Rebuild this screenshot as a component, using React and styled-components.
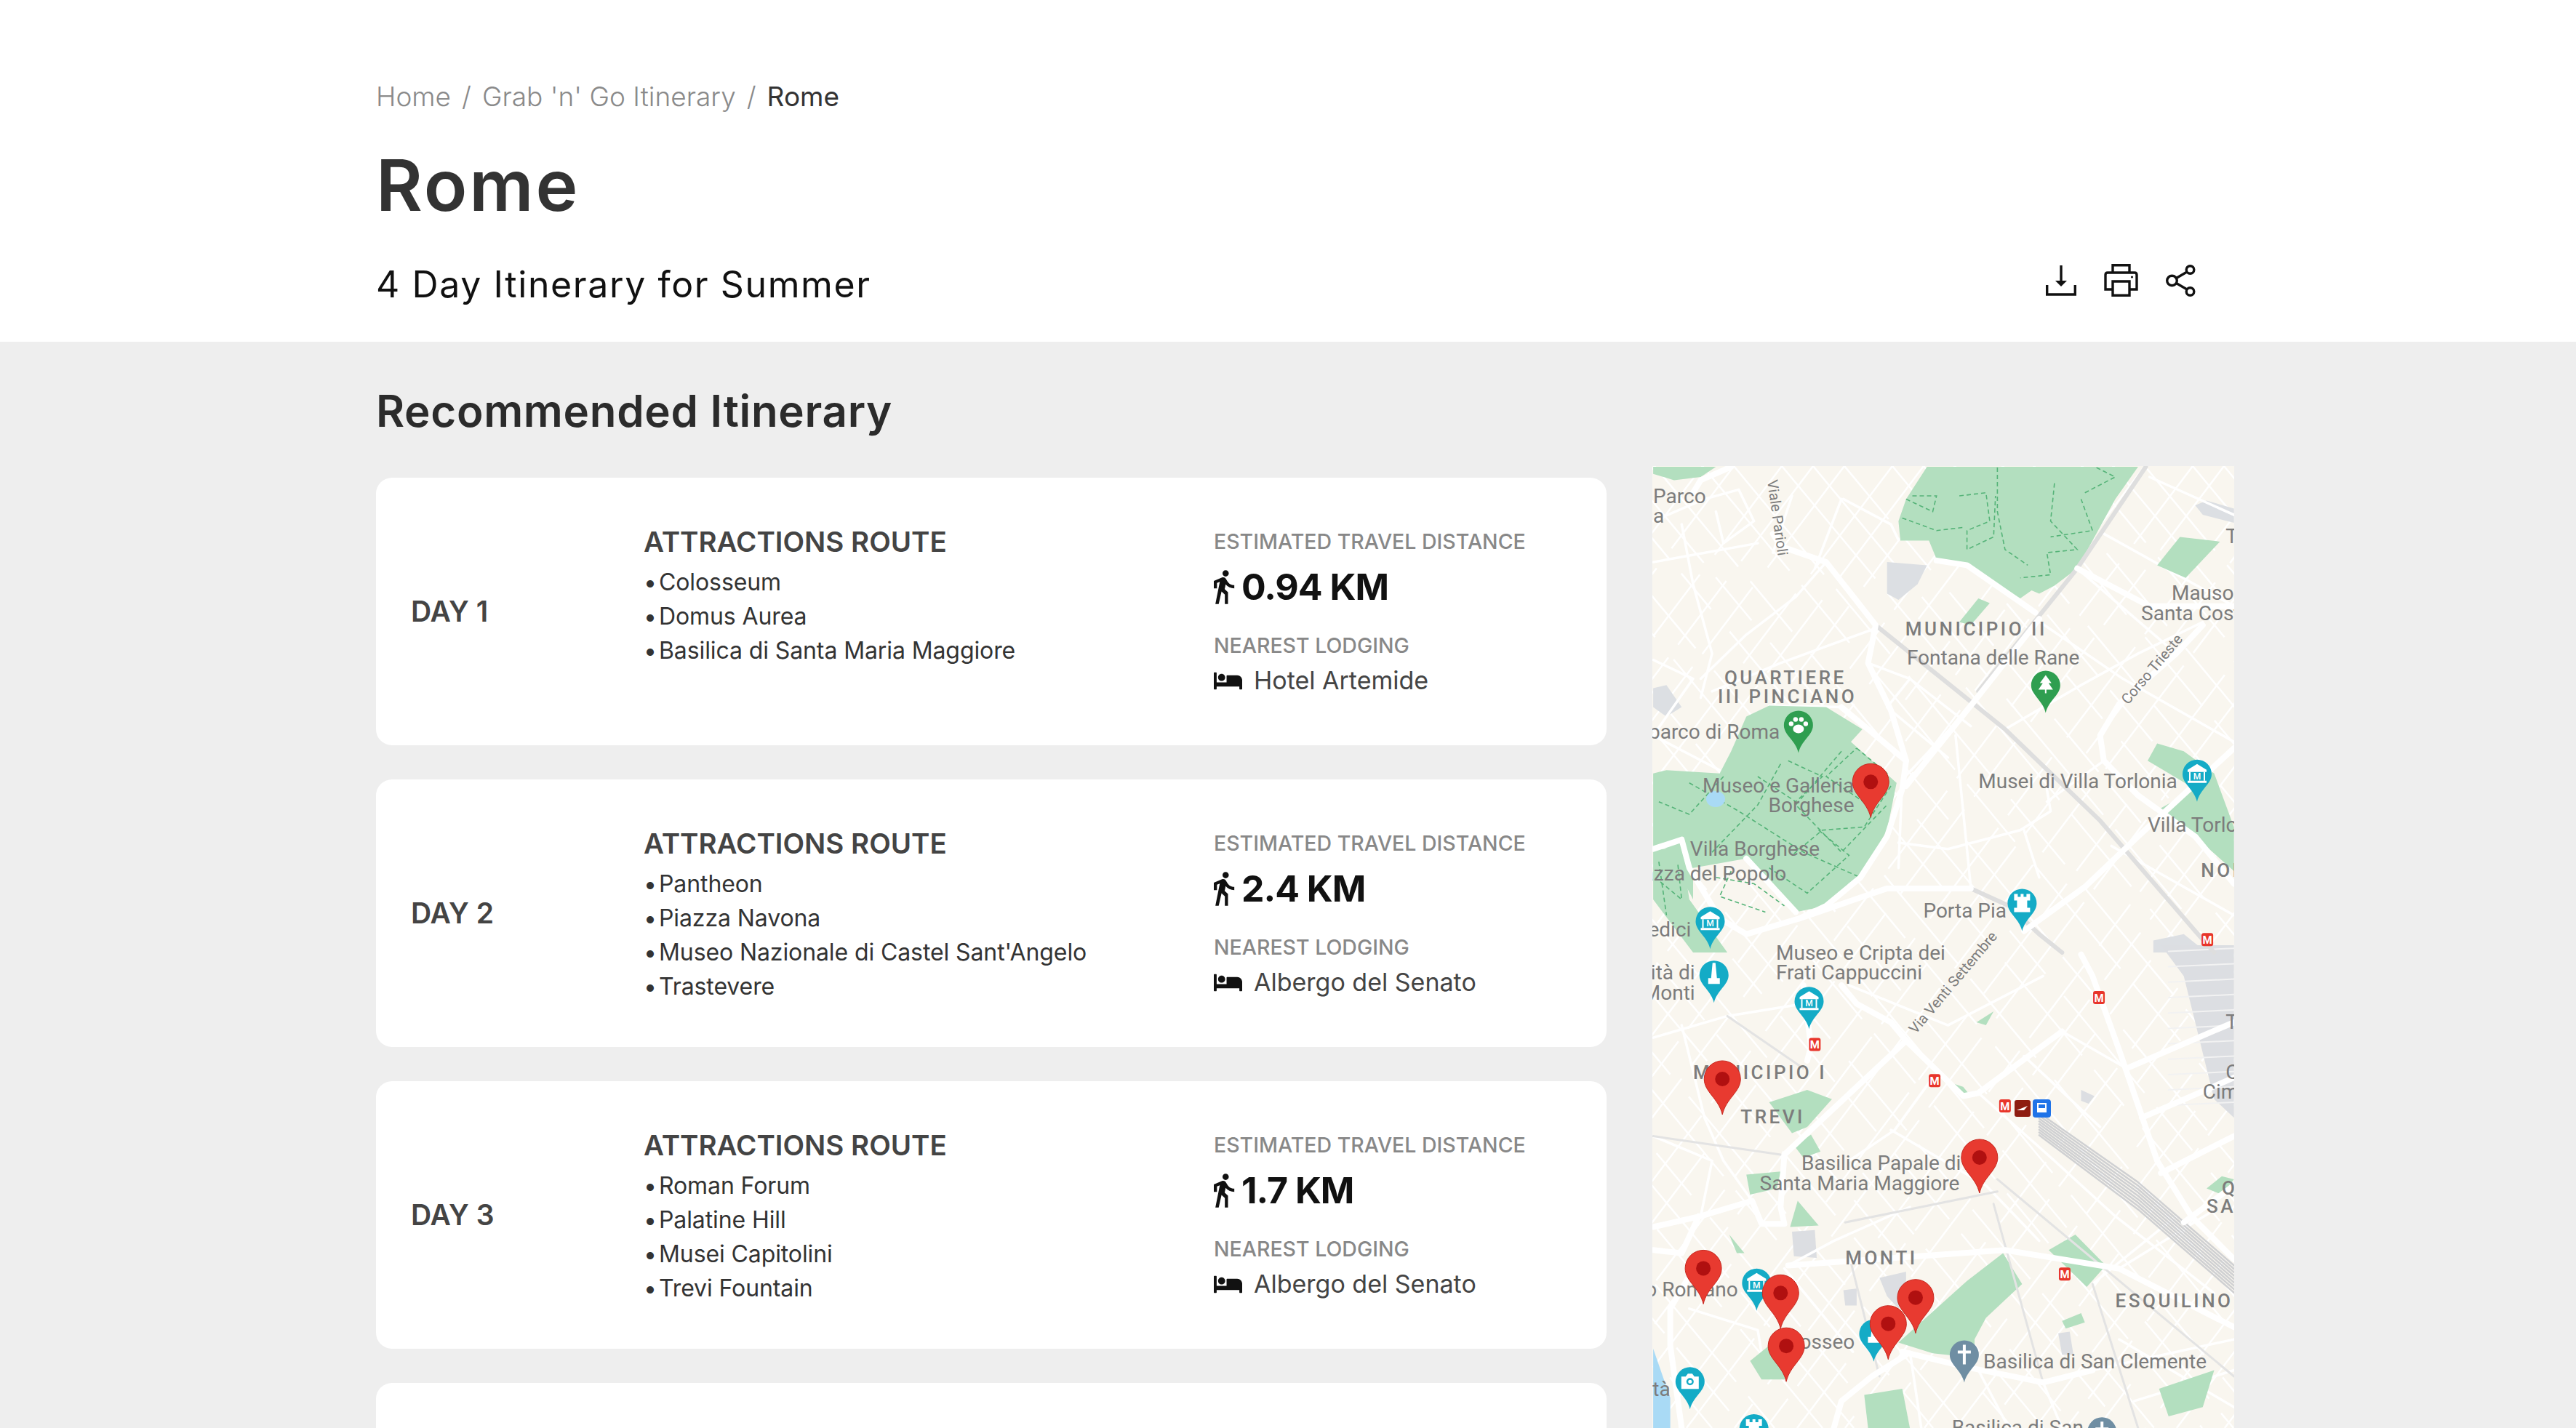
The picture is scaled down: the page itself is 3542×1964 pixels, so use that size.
import React from 'react'
import styled, { createGlobalStyle } from 'styled-components'
import { MdDirectionsWalk } from 'react-icons/md'
import { FaBed } from 'react-icons/fa'

const GlobalStyle = createGlobalStyle`
  html, body { margin: 0; padding: 0; background: #eeeeee; }
  #root { height: 1964px; overflow: hidden; font-family: Inter, "Liberation Sans", sans-serif; }
`

// map coordinates were read off two crops of the reference, so two converters
const z5 = ([x, y]) => [x / 1.912 - 12, y / 2.306 - 11]
const z6 = ([x, y]) => [x / 1.912 - 12, y / 2.361 + 659]
const line = (conv, pts, close) =>
  'M' + pts.map(p => conv(p).map(n => n.toFixed(1)).join(' ')).join('L') + (close ? 'Z' : '')

const days = [
  { day: 'DAY 1', stops: ['Colosseum', 'Domus Aurea', 'Basilica di Santa Maria Maggiore'], km: '0.94 KM', hotel: 'Hotel Artemide' },
  { day: 'DAY 2', stops: ['Pantheon', 'Piazza Navona', 'Museo Nazionale di Castel Sant\'Angelo', 'Trastevere'], km: '2.4 KM', hotel: 'Albergo del Senato' },
  { day: 'DAY 3', stops: ['Roman Forum', 'Palatine Hill', 'Musei Capitolini', 'Trevi Fountain'], km: '1.7 KM', hotel: 'Albergo del Senato' },
]

const parks5 = [
  [[745, 28], [690, 130], [670, 200], [675, 262], [750, 262], [770, 320], [860, 350], [990, 445], [1020, 420], [1040, 430], [1080, 405], [1140, 350], [1240, 130], [1300, 28]],
  [[25, 28], [190, 28], [150, 60], [80, 70], [25, 50]],
  [[270, 820], [330, 785], [480, 790], [575, 860], [545, 900], [665, 1030], [640, 1180], [570, 1330], [480, 1420], [400, 1440], [270, 1270], [130, 1300], [130, 1400], [60, 1240], [25, 1235], [25, 1000], [60, 990], [200, 1000], [230, 930]],
  [[25, 1240], [100, 1240], [120, 1400], [220, 1568], [130, 1568], [25, 1400]],
  [[1325, 960], [1350, 905], [1420, 930], [1500, 1000], [1552, 1170], [1552, 1310], [1450, 1200], [1345, 1120], [1450, 1050]],
  [[1350, 340], [1410, 250], [1515, 265], [1425, 380]],
  [[830, 520], [880, 445], [910, 460], [860, 530]],
]
const parks6 = [
  [[330, 510], [430, 470], [495, 500], [430, 590], [390, 610]],
  [[395, 650], [440, 615], [465, 670], [420, 690]],
  [[270, 745], [360, 735], [350, 790], [280, 810]],
  [[405, 830], [460, 910], [385, 915]],
  [[670, 1290], [850, 1090], [945, 1000], [995, 1100], [900, 1210], [870, 1280], [870, 1340], [760, 1325]],
  [[1065, 990], [1135, 940], [1215, 1040], [1165, 1110]],
  [[280, 1350], [330, 1300], [400, 1340], [370, 1410], [310, 1410]],
  [[580, 1460], [680, 1440], [700, 1568], [590, 1568]],
  [[1355, 1440], [1500, 1380], [1470, 1500], [1380, 1530]],
  [[1100, 1220], [1150, 1195], [1160, 1225], [1110, 1245]],
  [[815, 450], [840, 460], [860, 490], [835, 495]],
  [[225, 940], [265, 1000], [245, 1000]],
  [[1480, 790], [1520, 750], [1552, 760], [1520, 810]],
  [[875, 250], [920, 215], [900, 260]],
]
const paths5 = [
  [[690, 130], [760, 170], [770, 120], [700, 120]],
  [[830, 120], [900, 110], [910, 200], [850, 230], [850, 290], [920, 250], [925, 120]],
  [[680, 190], [770, 230], [840, 220]],
  [[1080, 80], [1070, 200], [1140, 290], [1060, 300], [1070, 370], [990, 380]],
  [[930, 30], [930, 170], [950, 290], [1010, 340]],
  [[1160, 110], [1240, 60], [1190, 30]],
  [[1150, 130], [1180, 230], [1070, 250]],
  [[120, 1030], [250, 1120], [420, 1250], [570, 1330]],
  [[360, 970], [300, 1100], [180, 1250]],
  [[520, 930], [400, 1100], [520, 1250], [640, 1100]],
  [[230, 1310], [200, 1390], [320, 1440]],
  [[650, 1040], [580, 1170], [470, 1180], [390, 1260]],
  [[40, 1280], [60, 1450]],
  [[90, 1290], [100, 1400], [40, 1340]],
  [[560, 920], [640, 1000], [590, 1100], [480, 1010], [560, 920]],
  [[460, 1180], [540, 1260], [430, 1380], [330, 1300]],
  [[210, 1010], [120, 1130], [40, 1090]],
  [[380, 960], [470, 1010], [400, 1090], [300, 1010]],
  [[190, 1330], [290, 1350], [370, 1420]],
]
const gray5 = [
  [[640, 330], [745, 340], [720, 400], [670, 450], [640, 430]],
  [[1450, 150], [1480, 135], [1552, 160], [1552, 205], [1470, 180]],
  [[25, 730], [60, 720], [100, 790], [60, 820], [25, 790]],
  [[1340, 1530], [1420, 1510], [1480, 1568], [1340, 1568]],
]
const gray6 = [
  [[1360, 0], [1552, 0], [1552, 560], [1500, 500], [1420, 100]],
  [[390, 930], [450, 925], [455, 1015], [395, 1010]],
  [[620, 1080], [690, 1060], [690, 1130], [670, 1180], [640, 1140]],
  [[525, 1120], [560, 1115], [560, 1170], [530, 1170]],
  [[1150, 470], [1185, 490], [1170, 515], [1150, 505]],
  [[1090, 1260], [1120, 1255], [1130, 1330], [1100, 1330]],
]
const bigRoads5 = [
  [[230, 28], [150, 70], [130, 110]],
  [[340, 240], [360, 280], [480, 330], [610, 530], [590, 650], [650, 800], [690, 960], [680, 1050], [640, 1200], [570, 1330], [480, 1420], [410, 1460], [270, 1510], [200, 1460], [120, 1300], [100, 1210], [25, 1240]],
  [[410, 1460], [640, 1365], [860, 1365]],
  [[520, 790], [690, 960]],
  [[690, 1040], [870, 770], [1040, 510]],
  [[1000, 1500], [1160, 1360], [1300, 1200], [1552, 920]],
  [[1470, 530], [1400, 620], [1250, 780], [1200, 880], [1210, 960], [1300, 1070], [1450, 1200], [1552, 1350]],
  [[270, 1270], [400, 1440]],
  [[1140, 350], [1330, 470], [1552, 470]],
  [[770, 325], [850, 340], [1030, 490]],
]
const railRoads5 = [
  [[860, 1365], [960, 1420], [1040, 1510], [1100, 1568]],
  [[610, 530], [950, 860], [1200, 1150], [1450, 1500], [1500, 1568]],
  [[880, 740], [1140, 350], [1320, 28]],
]
const minorRoads5 = [
  [[525, 130], [650, 210], [670, 260]], [[480, 330], [400, 440], [270, 560], [150, 700]],
  [[610, 540], [360, 650], [180, 740]], [[100, 210], [130, 400], [180, 620], [150, 760]],
  [[520, 130], [450, 350]], [[590, 650], [700, 700], [860, 850]], [[700, 700], [640, 790], [800, 950]],
  [[950, 860], [1150, 720], [1300, 620], [1470, 520]], [[1140, 350], [1400, 620]],
  [[1210, 240], [1552, 470]], [[1330, 60], [1552, 180]], [[1030, 510], [1260, 700], [1552, 900]],
  [[820, 840], [680, 1020], [670, 1300]], [[820, 880], [860, 1360]],
  [[1060, 1050], [1070, 1120], [990, 1180], [800, 1240], [670, 1220]], [[1210, 960], [1060, 1090]],
  [[1000, 1180], [1040, 1330]], [[1230, 1230], [1552, 1450]],
  [[25, 200], [160, 130], [250, 100], [290, 200], [210, 270], [190, 170]], [[390, 120], [340, 300]], [[25, 330], [300, 270]],
  [[25, 640], [130, 700], [25, 880], [200, 990]], [[330, 785], [520, 790]],
]
const bigRoads6 = [
  [[1150, 30], [1180, 100], [1250, 340], [1350, 700], [1440, 880], [1552, 1020]],
  [[650, 250], [690, 310], [840, 490], [880, 480], [1100, 280]],
  [[520, 130], [560, 190], [650, 250]],
  [[690, 310], [370, 680], [360, 850], [370, 905], [310, 905], [285, 830], [150, 880], [25, 915]],
  [[145, 880], [100, 1000], [25, 990]],
  [[150, 1010], [70, 1180], [70, 1300], [100, 1568]],
  [[680, 1320], [850, 1370], [1050, 1420], [1180, 1380]],
  [[690, 1330], [600, 1400], [520, 1480], [500, 1568]],
  [[1270, 400], [1552, 250]],
  [[380, 1040], [950, 990], [1250, 1050], [1552, 1240]],
  [[1360, 740], [1552, 620]],
  [[1310, 560], [1552, 430]],
  [[1420, 900], [1552, 780]],
  [[420, 130], [440, 330], [430, 375]],
]
const thinRoads6 = [
  [[1180, 1100], [1300, 1568]],
  [[930, 760], [1552, 1400]],
  [[920, 840], [1050, 1420]],
  [[530, 900], [930, 800]],
  [[545, 1030], [620, 1400]],
  [[25, 620], [360, 680]],
  [[220, 230], [420, 400]],
]
const minorRoads6 = [
  [[25, 300], [220, 230], [420, 190]], [[100, 260], [160, 560], [210, 700], [285, 830]],
  [[540, 130], [800, 260], [1050, 100]], [[760, 430], [660, 600], [540, 700]],
  [[880, 480], [1080, 700], [1240, 880], [1500, 1130]], [[1000, 360], [1200, 590]],
  [[1100, 280], [1270, 400]], [[650, 600], [900, 780], [1040, 960]], [[25, 620], [180, 700], [150, 880]],
  [[380, 1040], [500, 960], [700, 850]], [[1180, 1100], [1400, 880]], [[1250, 1050], [1500, 860]],
  [[700, 1320], [730, 1568]], [[1050, 1420], [1100, 1568]], [[880, 1380], [960, 1568]],
  [[370, 1050], [550, 1320]], [[120, 1180], [300, 1250], [320, 1400]], [[1250, 1280], [1552, 1500]],
  [[1180, 1380], [1552, 1280]], [[1290, 1480], [1552, 1380]],
]

const labels = [
  [z5, 25, 142, 'Parco'], [z5, 25, 205, 'a'],
  [z5, 688, 562, 'MUNICIPIO II', 'caps'],
  [z5, 692, 655, 'Fontana delle Rane'],
  [z5, 212, 718, 'QUARTIERE', 'caps'], [z5, 195, 778, 'III PINCIANO', 'caps'],
  [z5, 358, 890, 'Bioparco di Roma', 'end'],
  [z5, 155, 1060, 'Museo e Galleria'], [z5, 328, 1122, 'Borghese'],
  [z5, 122, 1262, 'Villa Borghese'], [z5, 375, 1340, 'Piazza del Popolo', 'end'],
  [z5, 125, 1518, 'Villa Medici', 'end'],
  [z5, 880, 1048, 'Musei di Villa Torlonia'], [z5, 1325, 1185, 'Villa Torlonia'],
  [z5, 1465, 1328, 'NOI', 'caps'],
  [z5, 1388, 450, 'Mausoleo'], [z5, 1308, 515, 'Santa Costanza'],
  [z5, 1530, 270, 'T'], [z5, 735, 1458, 'Porta Pia'],
  [z6, 348, 48, 'Museo e Cripta dei'], [z6, 348, 112, 'Frati Cappuccini'],
  [z6, 135, 110, 'Trinità di', 'end'], [z6, 135, 178, 'Monti', 'end'],
  [z6, 130, 435, 'MUNICIPIO I', 'caps'], [z6, 255, 578, 'TREVI', 'caps'],
  [z6, 415, 730, 'Basilica Papale di'], [z6, 305, 795, 'Santa Maria Maggiore'],
  [z6, 530, 1037, 'MONTI', 'caps'], [z6, 248, 1140, 'Foro Romano', 'end'],
  [z6, 555, 1310, 'Colosseo', 'end'], [z6, 1240, 1175, 'ESQUILINO', 'caps'],
  [z6, 893, 1375, 'Basilica di San Clemente'], [z6, 810, 1590, 'Basilica di San'],
  [z6, 1530, 435, 'C'], [z6, 1470, 497, 'Cim'], [z6, 1530, 272, 'T'],
  [z6, 1520, 810, 'Q', 'caps'], [z6, 1480, 870, 'SA', 'caps'], [z6, 70, 1465, 'Città', 'end'],
]

const pinPath = (x, y, w, h) =>
  `M${x} ${y}C${x - w * 0.1} ${y - h * 0.3} ${x - w / 2} ${y - h * 0.42} ${x - w / 2} ${y - h + w / 2}A${w / 2} ${w / 2} 0 1 1 ${x + w / 2} ${y - h + w / 2}C${x + w / 2} ${y - h * 0.42} ${x + w * 0.1} ${y - h * 0.3} ${x} ${y}Z`

function Glyph({ kind, fill }) {
  if (kind === 'tree') return <path fill="#fff" d="M0-14L8-3H4L10 6H1V11H-1V6H-10L-4-3H-8Z" />
  if (kind === 'paw') return (
    <g fill="#fff">
      <ellipse cx="0" cy="5" rx="7.5" ry="6" /><circle cx="-10" cy="-2" r="3.2" /><circle cx="10" cy="-2" r="3.2" />
      <circle cx="-4" cy="-8" r="3.2" /><circle cx="4" cy="-8" r="3.2" />
    </g>
  )
  if (kind === 'museum') return (
    <g>
      <path fill="#fff" d="M0-14L13-6V-3H-13V-6ZM-13 9H13V12H-13Z" />
      <path fill="none" stroke="#fff" strokeWidth="2" d="M-10-3V9M10-3V9" />
      <MetroLetter x="0" y="7" $size="12">M</MetroLetter>
    </g>
  )
  if (kind === 'tower') return <path fill="#fff" d="M-11-13H-6V-9H-2V-13H2V-9H6V-13H11V-4H7V6H11V12H-11V6H-7V-4H-11Z" />
  if (kind === 'monument') return <path fill="#fff" d="M-2-17H2L4 4H8V12H-8V4H-4Z" />
  if (kind === 'camera') return (
    <g>
      <path fill="#fff" d="M-12-7H-6L-3-11H3L6-7H12V10H-12Z" />
      <circle r="5" fill={fill} /><circle r="2.5" fill="#fff" />
    </g>
  )
  return <path fill="#fff" d="M-2-14H2V-6H9V-2H2V13H-2V-2H-9V-6H-2Z" />
}

function PlacePin({ at, kind, fill }) {
  const [x, y] = at
  const w = 40
  const h = 58
  return (
    <g>
      <path d={pinPath(x, y, w, h)} fill={fill} />
      <g transform={`translate(${x} ${y - h + w / 2})`}><Glyph kind={kind} fill={fill} /></g>
    </g>
  )
}

function RedPin({ at }) {
  const [x, y] = at
  return (
    <g>
      <path d={pinPath(x, y, 50, 74)} fill="#e83a30" stroke="#c5281f" strokeWidth="1" />
      <circle cx={x} cy={y - 49} r="10" fill="#b01010" />
    </g>
  )
}

function Metro({ at }) {
  const [x, y] = at
  return (
    <g>
      <rect x={x - 8} y={y - 9} width="16" height="18" rx="3" fill="#e8352b" />
      <MetroLetter x={x} y={y + 6} $size="15" $bold>M</MetroLetter>
    </g>
  )
}

function MapDrawing() {
  // thin street texture, two diagonal families, irregular spacing and broken up with dashes
  const streets = []
  for (let i = -30; i < 50; i++) {
    const o = i * 52 + ((i * 37 + 900) % 23)
    streets.push(<StreetLine key={'a' + i} x1={o} y1="0" x2={o + 1100} y2="1323" strokeDasharray={`${90 + (i + 30) * 7 % 120} 26 ${60 + (i + 30) * 13 % 90} 40`} />)
    streets.push(<StreetLine key={'b' + i} x1={o} y1="0" x2={o - 1000} y2="1323" strokeDasharray={`${70 + (i + 30) * 11 % 140} 34 ${80 + (i + 30) * 5 % 70} 22`} />)
  }
  // tracks running out of the station
  const tracks = []
  for (let i = 0; i < 9; i++) {
    const d = line(z6, [[1040, 545 + i * 9], [1300, 770 + i * 11], [1552, 1040 + i * 11]])
    tracks.push(<Road key={i} d={d} $w="2.5" $c="#cfd0d2" />)
  }
  // block pattern on the railway land at the top right
  const blocks = []
  for (let i = 0; i < 11; i++) {
    const d = line(z6, [[1380, 20 + i * 50], [1552, 10 + i * 50]])
    blocks.push(<Road key={i} d={d} $w="2" $c="#f2f2f2" />)
  }
  return (
    <svg viewBox="0 0 800 1323" width="800" height="1323">
      <rect width="800" height="1323" fill="#f9f6ef" />
      {streets}
      {gray5.map((p, i) => <path key={i} d={line(z5, p, true)} fill="#dcdfe3" />)}
      {gray6.map((p, i) => <path key={i} d={line(z6, p, true)} fill="#dcdee2" />)}
      {blocks}
      {minorRoads5.map((p, i) => <Road key={i} d={line(z5, p)} $w="3.5" $c="#ffffff" />)}
      {minorRoads6.map((p, i) => <Road key={i} d={line(z6, p)} $w="3.5" $c="#ffffff" />)}
      {parks5.map((p, i) => <path key={i} d={line(z5, p, true)} fill="#b3dfbf" />)}
      {parks6.map((p, i) => <path key={i} d={line(z6, p, true)} fill="#b3dfbf" />)}
      {paths5.map((p, i) => <path key={i} d={line(z5, p)} fill="none" stroke="#55b378" strokeWidth="1.6" strokeDasharray="6 4" />)}
      <path d={line(z6, [[25, 1310], [70, 1470], [70, 1568], [25, 1568]], true)} fill="#a9daf5" />
      <ellipse cx="87" cy="458" rx="13" ry="11" fill="#a9daf5" />
      {tracks}
      {railRoads5.map((p, i) => <Road key={i} d={line(z5, p)} $w="6" $c="#dedede" />)}
      {thinRoads6.map((p, i) => <Road key={i} d={line(z6, p)} $w="3" $c="#e3e3e3" />)}
      {bigRoads5.map((p, i) => <Road key={i} d={line(z5, p)} $w="8" $c="#ffffff" />)}
      {bigRoads6.map((p, i) => <Road key={i} d={line(z6, p)} $w="8" $c="#ffffff" />)}
      {labels.map(([conv, x, y, text, mode]) => {
        const [lx, ly] = conv([x, y])
        return <MapLabel key={text + x} x={lx} y={ly} $caps={mode === 'caps'} textAnchor={mode === 'end' ? 'end' : 'start'}>{text}</MapLabel>
      })}
      <RoadName transform="translate(158 20) rotate(82)">Viale Parioli</RoadName>
      <RoadName transform="translate(654 329) rotate(-50)">Corso Trieste</RoadName>
      <RoadName transform="translate(362 782) rotate(-50)">Via Venti Settembre</RoadName>

      <PlacePin at={z5([1057, 808])} kind="tree" fill="#2f9e50" />
      <PlacePin at={z5([407, 935])} kind="paw" fill="#2f9e50" />
      <PlacePin at={z5([1455, 1090])} kind="museum" fill="#14abc6" />
      <PlacePin at={z5([175, 1557])} kind="museum" fill="#14abc6" />
      <PlacePin at={z5([995, 1500])} kind="tower" fill="#14abc6" />
      <PlacePin at={z6([185, 187])} kind="monument" fill="#14abc6" />
      <PlacePin at={z6([435, 272])} kind="museum" fill="#14abc6" />
      <PlacePin at={z6([297, 1187])} kind="museum" fill="#14abc6" />
      <PlacePin at={z6([605, 1352])} kind="monument" fill="#14abc6" />
      <PlacePin at={z6([122, 1507])} kind="camera" fill="#14abc6" />
      <PlacePin at={z6([290, 1660])} kind="tower" fill="#14abc6" />
      <PlacePin at={z6([843, 1420])} kind="cross" fill="#6f8ea3" />
      <PlacePin at={z6([1205, 1670])} kind="cross" fill="#6f8ea3" />

      <Metro at={z5([1482, 1527])} />
      <Metro at={z6([450, 322])} />
      <Metro at={z6([1197, 170])} />
      <Metro at={z6([765, 440])} />
      <Metro at={z6([950, 522])} />
      <Metro at={z6([1107, 1068])} />
      <rect x="498" y="872" width="22" height="23" rx="3" fill="#8e1c10" />
      <path d="M501 886L516 880L511 886Z" fill="#fff" />
      <rect x="523" y="871" width="25" height="25" rx="4" fill="#1f73e8" />
      <path d="M529 876H542V889H529Z M531 878V883H540V878Z" fill="#fff" fillRule="evenodd" />

      <RedPin at={z5([597, 1140])} />
      <RedPin at={z6([207, 550])} />
      <RedPin at={z6([883, 805])} />
      <RedPin at={z6([157, 1165])} />
      <RedPin at={z6([360, 1245])} />
      <RedPin at={z6([715, 1260])} />
      <RedPin at={z6([643, 1345])} />
      <RedPin at={z6([375, 1417])} />
    </svg>
  )
}

function DownloadIcon() {
  return (
    <svg width="42" height="42" viewBox="0 0 42 42" fill="none" stroke="#111" strokeWidth="3.4">
      <path d="M21 0V24" />
      <path d="M13 21H29L21 29Z" fill="#111" stroke="none" />
      <path d="M1.7 27V40H40.3V27" />
    </svg>
  )
}

function PrintIcon() {
  return (
    <svg width="47" height="45" viewBox="0 0 47 45" fill="none" stroke="#111" strokeWidth="3.4">
      <path d="M12 12V1.7H35V12" />
      <path d="M12 35H2V15Q2 12 5 12H42Q45 12 45 15V35H35" />
      <path d="M12 24H35V43.3H12Z" />
      <circle cx="38.500" cy="18" r="1.600" fill="#111" stroke="none" />
    </svg>
  )
}

function ShareIcon() {
  return (
    <svg width="41" height="44" viewBox="0 0 41 44" fill="none" stroke="#111" strokeWidth="3.4">
      <circle cx="8.500" cy="22" r="6.800" />
      <circle cx="33.500" cy="7" r="5.300" />
      <circle cx="33.500" cy="37" r="5.300" />
      <path d="M14.500 18.500L29 10M14.500 25.500L29 34" />
    </svg>
  )
}

export default function App() {
  return (
    <>
      <GlobalStyle />
      <Header>
        <Crumbs>
          <Crumb>Home</Crumb><Sep>/</Sep><Crumb>Grab 'n' Go Itinerary</Crumb><Sep>/</Sep><Crumb $current>Rome</Crumb>
        </Crumbs>
        <Title>Rome</Title>
        <SubRow>
          <Subtitle>4 Day Itinerary for Summer</Subtitle>
          <Actions><DownloadIcon /><PrintIcon /><ShareIcon /></Actions>
        </SubRow>
      </Header>
      <Body>
        <SectionTitle>Recommended Itinerary</SectionTitle>
        <Columns>
          <CardList>
            {days.map(d => (
              <Card key={d.day}>
                <DayLabel>{d.day}</DayLabel>
                <Route>
                  <RouteTitle>ATTRACTIONS ROUTE</RouteTitle>
                  {d.stops.map(s => <Stop key={s}><Bullet>•</Bullet>{s}</Stop>)}
                </Route>
                <Facts>
                  <FactLabel>ESTIMATED TRAVEL DISTANCE</FactLabel>
                  <Distance><MdDirectionsWalk size={52} />{d.km}</Distance>
                  <FactLabel $lower>NEAREST LODGING</FactLabel>
                  <Lodging><FaBed size={39} />{d.hotel}</Lodging>
                </Facts>
              </Card>
            ))}
            <Card />
          </CardList>
          <MapBox><MapDrawing /></MapBox>
        </Columns>
      </Body>
    </>
  )
}

const Header = styled.header`
  background: #fff;
  height: 470px;
  box-sizing: border-box;
  padding: 110px 517px 0;
`

const Crumbs = styled.nav`
  display: flex;
  font-size: 37px;
  line-height: 46px;
  font-weight: 300;
`

const Crumb = styled.span`
  color: ${props => (props.$current ? '#333' : '#8a8a8a')};
  font-weight: ${props => (props.$current ? 400 : 300)};
`

const Sep = styled.span`
  color: #8a8a8a;
  margin: 0 15px;
`

const Title = styled.h1`
  margin: 44px 0 0;
  font-size: 98px;
  line-height: 110px;
  font-weight: 600;
  color: #333;
  letter-spacing: 3px;
`

const SubRow = styled.div`
  display: flex;
  justify-content: space-between;
  align-items: center;
  margin-top: 51px;
  height: 60px;
`

const Subtitle = styled.div`
  font-size: 50px;
  line-height: 60px;
  color: #111;
  letter-spacing: 1.6px;
`

const Actions = styled.div`
  display: flex;
  align-items: center;
  gap: 38px;
  margin-top: -11px;
  padding-right: 6px;
`

const Body = styled.main`
  background: #eeeeee;
  padding: 60px 0 0 517px;
`

const SectionTitle = styled.h2`
  margin: 0;
  font-size: 60px;
  line-height: 70px;
  font-weight: 600;
  color: #2b2b2b;
  letter-spacing: 0.7px;
`

const Columns = styled.div`
  display: flex;
  align-items: flex-start;
  gap: 63px;
  margin-top: 41px;
`

const CardList = styled.div`
  width: 1692px;
  flex: none;
  display: flex;
  flex-direction: column;
  gap: 47px;
  padding-top: 16px;
`

const Card = styled.section`
  height: 368px;
  flex: none;
  box-sizing: border-box;
  background: #fff;
  border-radius: 22px;
  padding: 64px 0 0 48px;
  display: grid;
  grid-template-columns: 320px 784px 1fr;
  align-items: start;
`

const DayLabel = styled.div`
  font-size: 39px;
  line-height: 48px;
  font-weight: 600;
  color: #444;
  margin-top: 96px;
`

const Route = styled.div`
  display: flex;
  flex-direction: column;
`

const RouteTitle = styled.div`
  font-size: 38.500px;
  line-height: 48px;
  font-weight: 600;
  color: #444;
  margin-bottom: 8px;
`

const Stop = styled.div`
  font-size: 32px;
  line-height: 47px;
  letter-spacing: -0.1px;
  color: #333;
`

const Bullet = styled.span`
  display: inline-block;
  width: 21px;
`

const FactLabel = styled.div`
  font-size: 28.500px;
  line-height: 40px;
  font-weight: 500;
  color: #888;
  margin-top: ${props => (props.$lower ? '31px' : '4px')};
`

const Facts = styled.div`
  display: flex;
  flex-direction: column;
`

const Distance = styled.div`
  display: flex;
  align-items: center;
  font-size: 50px;
  line-height: 60px;
  font-weight: 700;
  letter-spacing: -1px;
  color: #111;
  margin-top: 12px;
  svg { margin: 0 -1px 0 -13px; }
`

const Lodging = styled.div`
  display: flex;
  align-items: center;
  gap: 16px;
  font-size: 34px;
  line-height: 42px;
  color: #444;
  margin-top: 7px;
  svg { color: #111; }
`

const MapBox = styled.div`
  width: 800px;
  height: 1323px;
  flex: none;
  overflow: hidden;
  svg { display: block; }
`

const StreetLine = styled.line`
  stroke: #ffffff;
  stroke-width: 2.500;
`

const Road = styled.path`
  fill: none;
  stroke: ${props => props.$c};
  stroke-width: ${props => props.$w};
  stroke-linejoin: round;
  stroke-linecap: round;
`

const MapLabel = styled.text`
  font-family: Roboto, sans-serif;
  font-size: ${props => (props.$caps ? '26px' : '28px')};
  font-weight: ${props => (props.$caps ? 500 : 400)};
  letter-spacing: ${props => (props.$caps ? '3.5px' : '0')};
  fill: #7c7c7c;
`

const RoadName = styled.text`
  font-family: Roboto, sans-serif;
  font-size: 20px;
  fill: #7c7c7c;
`

const MetroLetter = styled.text`
  font-family: Roboto, sans-serif;
  font-size: ${props => props.$size}px;
  font-weight: ${props => (props.$bold ? 700 : 500)};
  text-anchor: middle;
  fill: #fff;
`
